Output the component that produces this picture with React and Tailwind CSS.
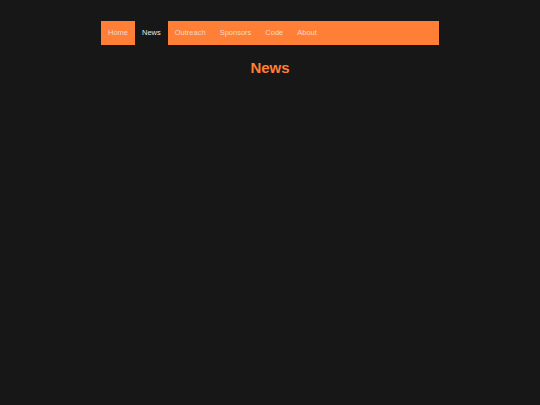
import React from 'react';

const links = ['Home', 'News', 'Outreach', 'Sponsors', 'Code', 'About'];

export default function App() {
  return (
    <div className="min-h-[405px] w-full bg-[#171717] pt-[21px]" style={{ fontFamily: '"Liberation Sans", Arial, sans-serif' }}>
      <nav className="mx-auto flex h-[24px] w-[338px] bg-[#ff7f36]">
        {links.map((l) => (
          <a
            key={l}
            href="#"
            className={
              l === 'News'
                ? 'flex items-center bg-[#171717] px-[7px] text-[7.5px] text-[#e4e4e4]'
                : 'flex items-center px-[7px] text-[7.5px] text-[#f4d8c8]'
            }
          >
            {l}
          </a>
        ))}
      </nav>
      <h1 className="mt-[14px] text-center text-[15px] font-bold leading-[18px] text-[#ff7f36]">News</h1>
    </div>
  );
}
